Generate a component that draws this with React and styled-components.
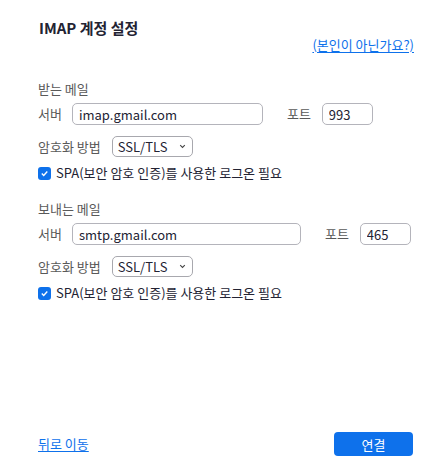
import React from 'react';
import styled, { createGlobalStyle } from 'styled-components';

const GlobalStyle = createGlobalStyle`
  html, body {
    margin: 0;
    padding: 0;
    background: #ffffff;
  }
  body {
    font-family: "Noto Sans CJK KR", "Noto Sans", sans-serif;
    color: #232333;
  }
`;

const blue = '#0e71eb';

const Page = styled.div`
  width: 448px;
  height: 463px;
  box-sizing: border-box;
  padding: 19px 34px 7px 38px;
  display: flex;
  flex-direction: column;
`;

const Title = styled.h2`
  margin: 0;
  font-size: 15px;
  font-weight: 700;
  line-height: 18px;
  padding-left: 1px;
  color: #232333;
`;

const LinkRow = styled.div`
  display: flex;
  justify-content: flex-end;
`;

const TextLink = styled.a`
  color: ${blue};
  font-size: 13px;
  line-height: 16px;
  text-decoration: underline;
  text-underline-offset: 2px;
  cursor: pointer;
`;

const Section = styled.section`
  display: flex;
  flex-direction: column;
  margin-top: ${p => p.$top}px;
`;

const SectionLabel = styled.div`
  font-size: 13px;
  line-height: 16px;
  color: #595959;
`;

const Row = styled.div`
  display: flex;
  align-items: center;
  line-height: 16px;
  margin-top: ${p => p.$top}px;
`;

const FieldLabel = styled.span`
  font-size: 13px;
  color: #595959;
  margin-right: ${p => p.$gap}px;
  margin-left: ${p => p.$left || 0}px;
`;

const Input = styled.input`
  box-sizing: border-box;
  width: ${p => p.$w}px;
  height: 22px;
  border: 1px solid #b4b4bb;
  border-radius: 5px;
  padding: 0 6px;
  font-family: inherit;
  font-size: 13px;
  color: #232333;
  outline: none;
`;

const SelectBox = styled.div`
  box-sizing: border-box;
  width: 81px;
  height: 21px;
  border: 1px solid #a8a8ae;
  border-radius: 5px;
  padding: 0 6px 0 5px;
  display: flex;
  align-items: center;
  justify-content: space-between;
  font-size: 13px;
  color: #232333;
`;

const Check = styled.span`
  width: 13px;
  height: 13px;
  border-radius: 3px;
  background: ${blue};
  display: inline-flex;
  align-items: center;
  justify-content: center;
  margin-right: 5px;
`;

const CheckText = styled.span`
  font-size: 13px;
  color: #232333;
`;

const Spacer = styled.div`
  flex: 1;
`;

const Footer = styled.div`
  display: flex;
  align-items: center;
  justify-content: space-between;
  padding-right: 1px;
`;

const Button = styled.button`
  width: 79px;
  height: 24px;
  border: none;
  border-radius: 4px;
  background: ${blue};
  color: #fff;
  font-family: inherit;
  font-size: 13px;
  cursor: pointer;
`;

const Chevron = () => (
  <svg width="7" height="5" viewBox="0 0 7 5">
    <path d="M1.2 1.2 L3.5 3.5 L5.8 1.2" fill="none" stroke="#444" strokeWidth="1.1" />
  </svg>
);

const Tick = () => (
  <svg width="9" height="9" viewBox="0 0 9 9">
    <path d="M1.8 4.6 L3.7 6.4 L7.3 2.6" fill="none" stroke="#fff" strokeWidth="1.4" />
  </svg>
);

function MailSection({ label, top, server, serverWidth, port }) {
  return (
    <Section $top={top}>
      <SectionLabel>{label}</SectionLabel>
      <Row $top={6}>
        <FieldLabel $gap={10}>서버</FieldLabel>
        <Input $w={serverWidth} defaultValue={server} />
        <FieldLabel $left={24} $gap={11}>포트</FieldLabel>
        <Input $w={51} defaultValue={port} />
      </Row>
      <Row $top={11}>
        <FieldLabel $gap={11}>암호화 방법</FieldLabel>
        <SelectBox>
          <span>SSL/TLS</span>
          <Chevron />
        </SelectBox>
      </Row>
      <Row $top={8}>
        <Check><Tick /></Check>
        <CheckText>SPA(보안 암호 인증)를 사용한 로그온 필요</CheckText>
      </Row>
    </Section>
  );
}

export default function App() {
  return (
    <>
      <GlobalStyle />
      <Page>
        <Title>IMAP 계정 설정</Title>
        <LinkRow>
          <TextLink>(본인이 아닌가요?)</TextLink>
        </LinkRow>
        <MailSection label="받는 메일" top={28} server="imap.gmail.com" serverWidth={191} port="993" />
        <MailSection label="보내는 메일" top={20} server="smtp.gmail.com" serverWidth={229} port="465" />
        <Spacer />
        <Footer>
          <TextLink>뒤로 이동</TextLink>
          <Button>연결</Button>
        </Footer>
      </Page>
    </>
  );
}
